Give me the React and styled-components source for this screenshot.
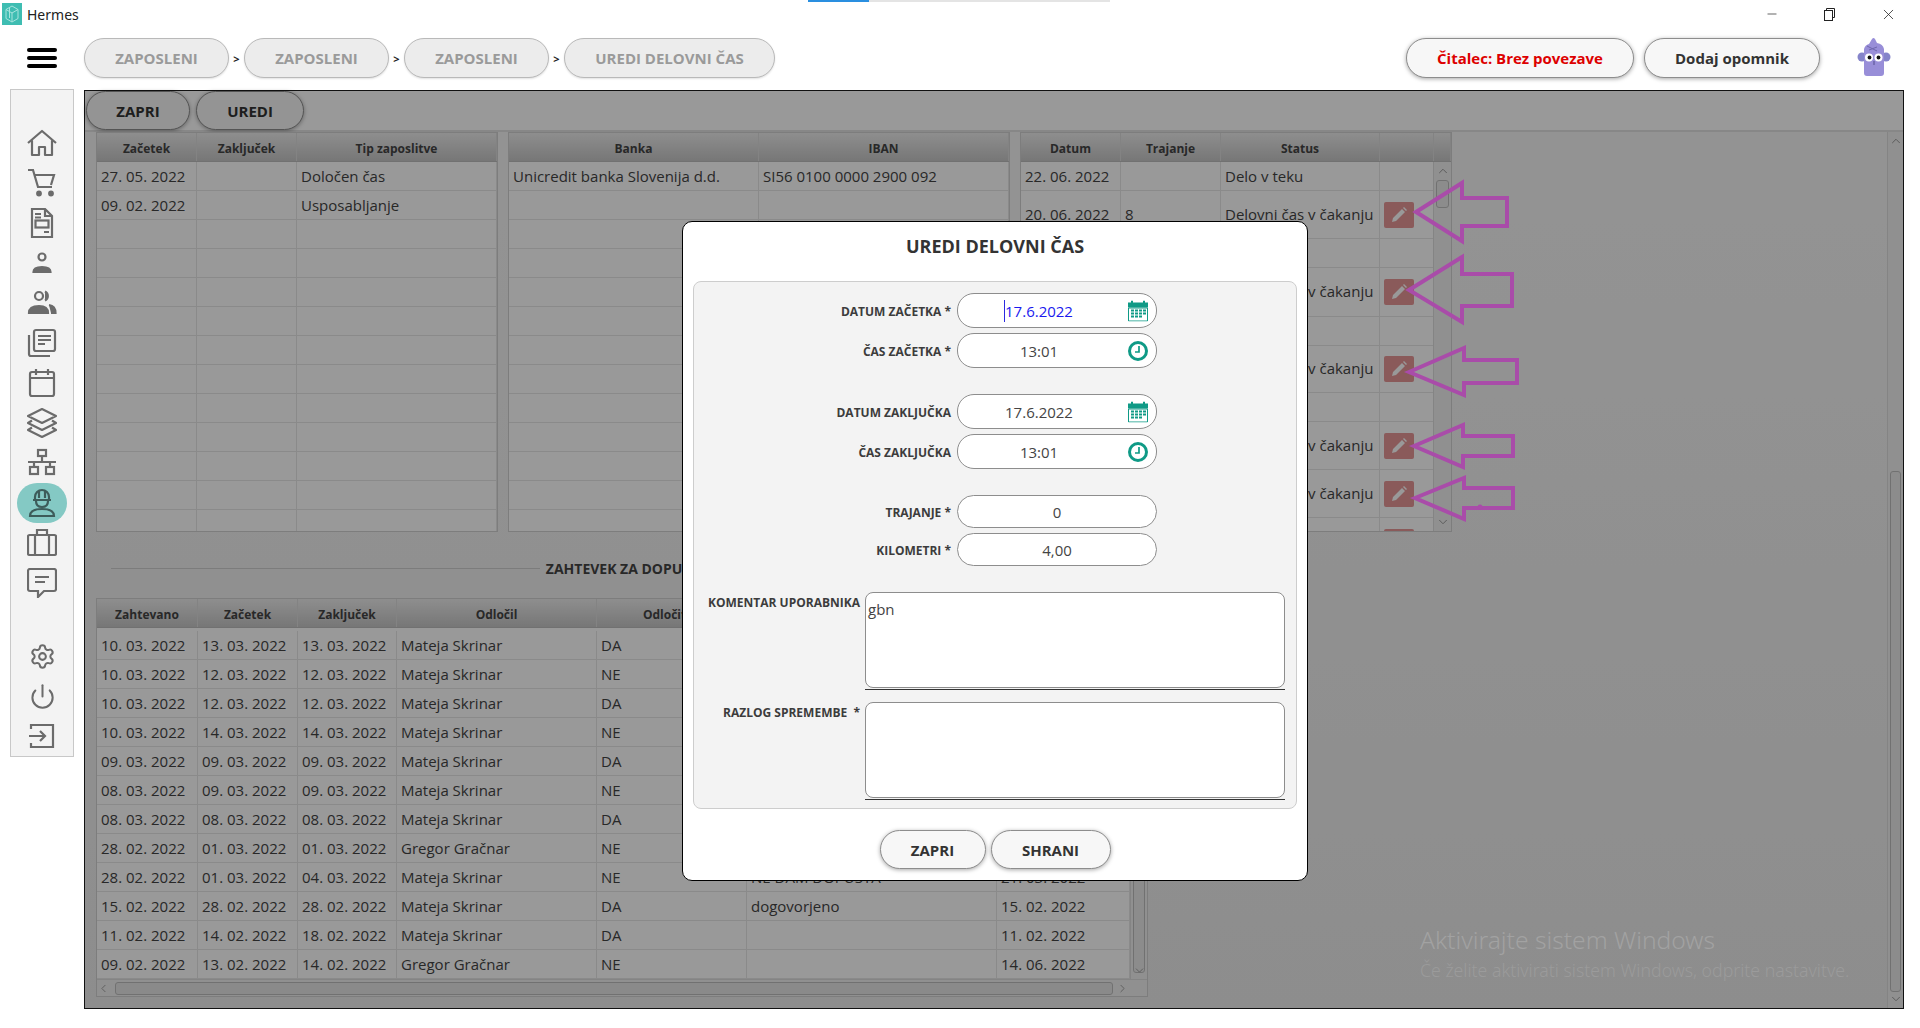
import React from 'react'
import styled, { createGlobalStyle } from 'styled-components'
import { ChevronUp, ChevronDown, ChevronLeft, ChevronRight, Minus, X, Settings, Power } from 'lucide-react'

const GlobalStyle = createGlobalStyle`
  html, body {
    margin: 0;
    padding: 0;
    background: #fff;
  }
  * {
    box-sizing: border-box;
  }
  body, input, textarea, button {
    font-family: "Open Sans", "Noto Sans", sans-serif;
  }
`

const Page = styled.div`
  position: relative;
  width: 1920px;
  height: 1028px;
  overflow: hidden;
  background: #fff;
`

const LoadBar = styled.div`
  position: absolute;
  top: 0;
  left: 808px;
  width: 302px;
  height: 2px;
  background: linear-gradient(90deg, #2a8fe0 0, #2a8fe0 61px, #e4e4e4 61px, #e4e4e4 100%);
`

const TitleBar = styled.div`
  display: flex;
  align-items: center;
  height: 30px;
  padding: 0 0 2px 2px;
`

const AppName = styled.span`
  margin-left: 5px;
  font-family: "Noto Sans", "Open Sans", sans-serif;
  font-size: 14px;
  color: #222;
`

const WindowButtons = styled.div`
  display: flex;
  align-items: center;
  margin-left: auto;
  padding-right: 23px;
  gap: 44px;
  color: #222;
`

const Header = styled.div`
  display: flex;
  align-items: center;
  height: 60px;
  padding-bottom: 4px;
`

const Burger = styled.div`
  display: flex;
  flex-direction: column;
  gap: 4px;
  width: 30px;
  margin: 0 27px;
  span {
    height: 4px;
    border-radius: 2px;
    background: #000;
  }
`

const Crumbs = styled.div`
  display: flex;
  align-items: center;
`

const Crumb = styled.div`
  display: flex;
  align-items: center;
  justify-content: center;
  width: ${p => p.$width}px;
  height: 40px;
  border: 1px solid #b9b9b9;
  border-radius: 20px;
  background: #ececec;
  box-shadow: 0 1px 2px rgba(0, 0, 0, .12);
  font-size: 15px;
  font-weight: 700;
  color: #9a9a9a;
`

const CrumbSep = styled.span`
  width: 15px;
  text-align: center;
  font-size: 11px;
  font-weight: 700;
  color: #222;
`

const HeaderRight = styled.div`
  display: flex;
  align-items: center;
  margin-left: auto;
  padding-right: 28px;
`

const Pill = styled.button`
  width: ${p => p.$width}px;
  height: ${p => p.$height || 40}px;
  margin-left: ${p => p.$left || 0}px;
  padding: 0;
  border: 1px solid #8d8d8d;
  border-radius: 20px;
  background: #f7f7f7;
  box-shadow: 0 1px 4px rgba(0, 0, 0, .35);
  font-size: 15px;
  font-weight: 700;
  color: ${p => p.$color || '#333'};
`

const Mascot = styled.svg`
  margin-left: 36px;
`

const Body = styled.div`
  display: flex;
  align-items: flex-start;
`

const Sidebar = styled.nav`
  display: flex;
  flex-direction: column;
  align-items: center;
  width: 64px;
  height: 668px;
  margin: -1px 10px 0;
  padding-top: 33px;
  background: #f3f3f3;
  border: 1px solid #c8c8c8;
`

const NavItem = styled.div`
  display: flex;
  align-items: center;
  justify-content: center;
  flex: none;
  width: 50px;
  height: 40px;
  margin-top: ${p => p.$top || 0}px;
  border-radius: 20px;
  background: ${p => (p.$active ? '#84c9c4' : 'transparent')};
  color: ${p => (p.$active ? '#3d5c5a' : '#6b6b6b')};
`

const NavIcon = styled.svg`
  width: 30px;
  height: 30px;
  fill: none;
  stroke: currentColor;
  stroke-width: 2.2;
`

const Main = styled.main`
  position: relative;
  display: flex;
  flex-direction: column;
  width: 1820px;
  height: 919px;
  border: 1px solid #111;
  background: #fff;
`

const Toolbar = styled.div`
  display: flex;
  flex: none;
  gap: 6px;
  height: 41px;
  padding-left: 1px;
  border-bottom: 2px solid #e2e2e2;
`

const Workspace = styled.div`
  display: flex;
  flex: 1;
  min-height: 0;
  background: linear-gradient(#f6f6f6, #ececec);
`

const ScrollArea = styled.div`
  flex: 1;
  padding-left: 11px;
`

const TopTables = styled.div`
  display: grid;
  grid-template-columns: 402px 502px 432px;
  column-gap: 10px;
  height: 400px;
`

const Table = styled.div`
  display: flex;
  flex-direction: column;
  overflow: hidden;
  width: ${p => (p.$width ? `${p.$width}px` : 'auto')};
  height: ${p => (p.$height ? `${p.$height}px` : '100%')};
  border: 1px solid #d0d0d0;
  background: #fff;
`

const Cols = styled.div`
  display: grid;
  flex: none;
  grid-template-columns: ${p => p.$cols};
`

const Head = styled(Cols)`
  height: 29px;
  background: linear-gradient(#ededed, #c6c6c6);
  border-bottom: 1px solid #bcbcbc;
`

const HeadCell = styled.div`
  display: flex;
  align-items: center;
  justify-content: center;
  padding-top: 2px;
  border-right: 1px solid #dadada;
  font-size: 12px;
  font-weight: 700;
  color: #444;
`

const Row = styled(Cols)`
  height: ${p => p.$height || 29}px;
  border-bottom: 1px solid #e6e6e6;
`

const Cell = styled.div`
  display: flex;
  align-items: center;
  padding: 0 0 ${p => (p.$lift ? 2 : 0)}px 4px;
  overflow: hidden;
  white-space: nowrap;
  border-right: 1px solid #e6e6e6;
  font-size: 15px;
  color: #444;
`

const TableBody = styled.div`
  display: flex;
  flex: 1;
  min-height: 0;
`

const Rows = styled.div`
  flex: 1;
  overflow: hidden;
  padding-top: ${p => p.$top || 0}px;
`

const VScroll = styled.div`
  display: flex;
  flex: none;
  flex-direction: column;
  align-items: center;
  width: ${p => p.$width || 18}px;
  padding: 2px 0;
  background: #f1f1f1;
  border-left: 1px solid #dcdcdc;
  color: #8c8c8c;
`

const Track = styled.div`
  flex: 1;
  width: 100%;
  min-height: 0;
  padding: 0 2px;
`

const Thumb = styled.div`
  height: ${p => p.$height}px;
  margin-top: ${p => p.$top}px;
  border: 1px solid #bdbdbd;
  border-radius: 3px;
  background: #eaeaea;
`

const HScroll = styled.div`
  display: flex;
  flex: none;
  align-items: center;
  height: 17px;
  background: #f1f1f1;
  border-top: 1px solid #dcdcdc;
  color: #8c8c8c;
`

const HThumb = styled.div`
  flex: 1;
  height: 13px;
  margin: 0 3px 0 5px;
  border: 1px solid #bdbdbd;
  border-radius: 3px;
  background: #e6e6e6;
`

const HSpacer = styled.span`
  flex: none;
  width: 18px;
`

const SectionTitle = styled.div`
  display: flex;
  align-items: center;
  gap: 6px;
  width: 1052px;
  height: 30px;
  margin-top: 21px;
  margin-bottom: 15px;
  padding: 0 15px;
  font-size: 14px;
  font-weight: 700;
  color: #444;
  &::before,
  &::after {
    content: "";
    flex: 1;
    height: 1px;
    background: #cfcfcf;
  }
`

const EditButton = styled.div`
  display: flex;
  align-items: center;
  justify-content: center;
  width: 30px;
  height: 26px;
  border-radius: 2px;
  background: #e69696;
  color: #fff;
`

const Backdrop = styled.div`
  position: absolute;
  inset: 0;
  z-index: 2;
  display: flex;
  align-items: flex-start;
  justify-content: center;
  padding: 130px 0 0 2px;
  background: rgba(0, 0, 0, .4);
`

const Modal = styled.div`
  display: flex;
  flex-direction: column;
  width: 626px;
  height: 660px;
  padding: 0 10px;
  border: 1px solid #000;
  border-radius: 10px;
  background: #fff;
`

const ModalTitle = styled.h2`
  flex: none;
  height: 59px;
  margin: 0;
  padding-top: 9px;
  text-align: center;
  font-size: 18px;
  line-height: 30px;
  font-weight: 700;
  color: #333;
`

const FormPanel = styled.div`
  display: flex;
  flex-direction: column;
  height: 528px;
  padding-top: 11px;
  border: 1px solid #cdcdcd;
  border-radius: 8px;
  background: #f3f3f3;
`

const FieldGroup = styled.div`
  display: flex;
  flex-direction: column;
  gap: 5px;
  margin-bottom: 26px;
`

const Field = styled.label`
  display: flex;
  align-items: center;
  gap: 6px;
`

const FieldLabel = styled.span`
  width: 257px;
  padding-top: 1px;
  text-align: right;
  font-size: 12px;
  font-weight: 700;
  color: #3c3c3c;
`

const InputBox = styled.div`
  position: relative;
  width: 200px;
  height: ${p => p.$height}px;
`

const Input = styled.input`
  width: 100%;
  height: 100%;
  padding: 0 ${p => (p.$withIcon ? 36 : 0)}px 0 0;
  border: 1px solid #8d8d8d;
  border-radius: 17px;
  outline: none;
  background: #fff;
  text-align: center;
  font-size: 15px;
  color: ${p => (p.$active ? '#1a1aee' : '#444')};
`

const Caret = styled.span`
  position: absolute;
  top: 7px;
  left: 47px;
  width: 1px;
  height: 22px;
  background: #2a2ae0;
`

const InputIcon = styled.svg`
  position: absolute;
  top: 50%;
  right: 9px;
  transform: translateY(-50%);
`

const AreaRow = styled.label`
  display: flex;
  align-items: flex-start;
  gap: 5px;
  margin-bottom: 12px;
`

const AreaLabel = styled.span`
  width: 166px;
  padding-top: 2px;
  text-align: right;
  font-size: 12px;
  font-weight: 700;
  color: #3c3c3c;
  white-space: nowrap;
`

const AreaWrap = styled.div`
  width: 420px;
  padding-bottom: 1px;
  border-bottom: 1px solid #333;
`

const TextArea = styled.textarea`
  display: block;
  width: 100%;
  height: 96px;
  padding: 6px 2px;
  border: 1px solid #8d8d8d;
  border-radius: 8px;
  outline: none;
  resize: none;
  background: #fff;
  font-size: 15px;
  color: #444;
`

const ModalFooter = styled.div`
  display: flex;
  justify-content: center;
  gap: 5px;
  margin-top: 21px;
`

const Watermark = styled.div`
  position: absolute;
  left: 1335px;
  top: 833px;
  z-index: 3;
  color: #a2a2a2;
  font-family: "Noto Sans", sans-serif;
  font-weight: 300;
  font-size: 24.6px;
  line-height: 32px;
  small {
    display: block;
    font-size: 17.7px;
    line-height: 28px;
    color: #9b9b9b;
  }
`

const ArrowLayer = styled.svg`
  position: absolute;
  top: 0;
  left: 0;
  z-index: 4;
  pointer-events: none;
`

const HomeIcon = () => (
  <NavIcon viewBox="0 0 30 30"><path d="M1 15 15 3l14 12M5 12.500V27h7v-8h6v8h7V12.500" strokeLinejoin="round" /></NavIcon>
)
const CartIcon = () => (
  <NavIcon viewBox="0 0 30 30">
    <path d="M1 2h5l5 17h14M7 7h20l-3 10" />
    <circle cx="12" cy="25.500" r="1.800" fill="currentColor" />
    <circle cx="24" cy="25.500" r="1.800" fill="currentColor" />
  </NavIcon>
)
const DocIcon = () => (
  <NavIcon viewBox="0 0 30 30">
    <path d="M5 1h13l7 7v21H5zM18 1v7h7M8 6h6M8 9.500h6M17 24h5" />
    <rect x="8.500" y="12.500" width="13" height="7" />
  </NavIcon>
)
const PersonIcon = () => (
  <NavIcon viewBox="0 0 30 30">
    <circle cx="15" cy="9" r="3.500" />
    <path d="M6.500 24c0-3.500 4-5 8.500-5s8.500 1.500 8.500 5z" fill="currentColor" />
  </NavIcon>
)
const PeopleIcon = () => (
  <NavIcon viewBox="0 0 30 30">
    <circle cx="12" cy="8" r="4" />
    <path d="M2 25c0-5 4.500-7 10-7s9 2 9 7z" fill="currentColor" />
    <path d="M18 3.500a5 5 0 0 1 0 9M22 17c4 .6 6.500 3 6.500 8H24" fill="currentColor" />
  </NavIcon>
)
const NewsIcon = () => (
  <NavIcon viewBox="0 0 30 30">
    <rect x="7" y="2" width="21" height="21" rx="2" />
    <path d="M2 7v19a2 2 0 0 0 2 2h19M11 8h13M11 12h13M11 16h7" />
  </NavIcon>
)
const CalendarIcon = () => (
  <NavIcon viewBox="0 0 30 30">
    <rect x="3" y="4" width="24" height="24" rx="2" />
    <path d="M3 10h24M9 1v6M21 1v6" />
  </NavIcon>
)
const LayersIcon = () => (
  <NavIcon viewBox="0 0 30 30">
    <path d="M15 1 29 8 15 15 1 8zM5 12.500 1 15l14 7 14-7-4-2.500M5 19.500 1 22l14 7 14-7-4-2.500" strokeLinejoin="round" />
  </NavIcon>
)
const NetworkIcon = () => (
  <NavIcon viewBox="0 0 30 30">
    <rect x="11" y="2" width="8" height="6" />
    <rect x="3" y="19" width="8" height="7" />
    <rect x="19" y="19" width="8" height="7" />
    <path d="M15 8v6M1 14h28M7 14v5M23 14v5" />
  </NavIcon>
)
const WorkerIcon = () => (
  <NavIcon viewBox="0 0 30 30">
    <path d="M8 12V9a7 7 0 0 1 14 0v3M6 12h18M12 3v7M18 3v7M9 13c0 4 2.500 6 6 6s6-2 6-6" />
    <path d="M3 28c0-5 5-7 12-7s12 2 12 7z" />
  </NavIcon>
)
const BriefcaseIcon = () => (
  <NavIcon viewBox="0 0 30 30">
    <rect x="1" y="7" width="28" height="20" rx="1.500" />
    <path d="M10 7V2h10v5M8 7v20M22 7v20" />
  </NavIcon>
)
const ChatIcon = () => (
  <NavIcon viewBox="0 0 30 30">
    <path d="M3 1h24a2 2 0 0 1 2 2v18a2 2 0 0 1-2 2H17l-6 6v-6H3a2 2 0 0 1-2-2V3a2 2 0 0 1 2-2z" />
    <path d="M8 9h14M8 14h10" />
  </NavIcon>
)
const ExitIcon = () => (
  <NavIcon viewBox="0 0 30 30">
    <path d="M4 8V4h22v22H4v-4M2 15h16M13 10l5 5-5 5" />
  </NavIcon>
)

const Logo = () => (
  <svg width="20" height="22" viewBox="0 0 20 22">
    <rect width="20" height="22" fill="#3fbdb2" />
    <path d="M10 3 16 6.500v9L10 19l-6-3.500v-9zM4 6.500 10 10l6-3.500M10 10v9M7.500 5v10" fill="none" stroke="#a8e4de" strokeWidth="1" />
  </svg>
)

const RestoreIcon = () => (
  <svg width="13" height="13" viewBox="0 0 13 13" fill="none" stroke="currentColor">
    <path d="M3.500 2.500V.5h8v9h-2" />
    <rect x="1.500" y="2.500" width="8" height="10" />
  </svg>
)

const MascotIcon = () => (
  <Mascot width="36" height="42" viewBox="0 0 36 42">
    <circle cx="6" cy="20" r="4.500" fill="#8584ca" />
    <circle cx="30" cy="20" r="4.500" fill="#8584ca" />
    <path d="M8 12 Q9 8 13 7 L16 2 Q17.500 0 19 2 L21 6 Q27 7 28 12 V36 Q28 39 25 39 H11 Q8 39 8 36 Z" fill="#988ed8" />
    <path d="M11 9l10 5M13 13l8-3" stroke="#6f67ad" fill="none" />
    <circle cx="13" cy="20.500" r="4" fill="#fff" />
    <circle cx="22.500" cy="20.500" r="4" fill="#fff" />
    <circle cx="13.500" cy="20.500" r="1.900" fill="#111" />
    <circle cx="22.500" cy="20.500" r="1.900" fill="#111" />
    <path d="M18 24v4" stroke="#554e90" />
  </Mascot>
)

const CalendarMark = () => (
  <InputIcon width="20" height="21" viewBox="0 0 20 21">
    <path d="M0 2h3V0h2v2h10V0h2v2h3v5H0z" fill="#0f9a86" />
    <path d="M.5 7.500h19v13H.5z" fill="#fff" stroke="#0f9a86" />
    <path d="M3 9h3v2H3zM7 9h3v2H7zM11 9h3v2h-3zM15 9h3v2h-3zM3 12h3v2H3zM7 12h3v2H7zM11 12h3v2h-3zM15 12h3v2h-3zM3 15h3v2H3zM7 15h3v2H7zM11 15h3v2h-3z" fill="#0f9a86" />
  </InputIcon>
)

const ClockMark = () => (
  <InputIcon width="20" height="20" viewBox="0 0 20 20" fill="none" stroke="#0f9a86">
    <circle cx="10" cy="10" r="8.500" strokeWidth="3" />
    <path d="M11 5v6H7" strokeWidth="1.700" />
  </InputIcon>
)

const PencilIcon = () => (
  <svg width="16" height="16" viewBox="0 0 16 16" fill="currentColor">
    <path d="M1 15l1-4L11 2l3 3-9 9zM12 1l1-1 3 3-1 1z" />
  </svg>
)

const navItems = [
  [HomeIcon], [CartIcon], [DocIcon], [PersonIcon], [PeopleIcon], [NewsIcon],
  [CalendarIcon], [LayersIcon], [NetworkIcon], [WorkerIcon, true], [BriefcaseIcon], [ChatIcon]
]

const staffCols = '100px 100px 200px'
const bankCols = '250px 250px'
const workCols = '100px 100px 159px 54px 17px'
const workRowCols = '100px 100px 159px 54px'
const requestCols = '101px 100px 99px 200px 150px 250px 133px 17px'
const requestRowCols = '101px 100px 99px 200px 150px 250px 133px'

const staffRows = [
  ['27. 05. 2022', '', 'Določen čas'],
  ['09. 02. 2022', '', 'Usposabljanje']
]

const workRows = [
  { date: '22. 06. 2022', hours: '', status: 'Delo v teku', height: 29 },
  { date: '20. 06. 2022', hours: '8', status: 'Delovni čas v čakanju', height: 48, edit: true },
  { date: '', hours: '', status: '', height: 29 },
  { date: '17. 06. 2022', hours: '8', status: 'Delovni čas v čakanju', height: 49, edit: true },
  { date: '', hours: '', status: '', height: 29 },
  { date: '16. 06. 2022', hours: '8', status: 'Delovni čas v čakanju', height: 47, edit: true },
  { date: '', hours: '', status: '', height: 29 },
  { date: '15. 06. 2022', hours: '8', status: 'Delovni čas v čakanju', height: 48, edit: true },
  { date: '14. 06. 2022', hours: '8', status: 'Delovni čas v čakanju', height: 48, edit: true },
  { date: '13. 06. 2022', hours: '8', status: 'Delovni čas v čakanju', height: 48, edit: true }
]

const requests = [
  ['10. 03. 2022', '13. 03. 2022', '13. 03. 2022', 'Mateja Skrinar', 'DA', '', '10. 03. 2022'],
  ['10. 03. 2022', '12. 03. 2022', '12. 03. 2022', 'Mateja Skrinar', 'NE', '', '10. 03. 2022'],
  ['10. 03. 2022', '12. 03. 2022', '12. 03. 2022', 'Mateja Skrinar', 'DA', '', '10. 03. 2022'],
  ['10. 03. 2022', '14. 03. 2022', '14. 03. 2022', 'Mateja Skrinar', 'NE', '', '10. 03. 2022'],
  ['09. 03. 2022', '09. 03. 2022', '09. 03. 2022', 'Mateja Skrinar', 'DA', '', '09. 03. 2022'],
  ['08. 03. 2022', '09. 03. 2022', '09. 03. 2022', 'Mateja Skrinar', 'NE', '', '08. 03. 2022'],
  ['08. 03. 2022', '08. 03. 2022', '08. 03. 2022', 'Mateja Skrinar', 'DA', '', '08. 03. 2022'],
  ['28. 02. 2022', '01. 03. 2022', '01. 03. 2022', 'Gregor Gračnar', 'NE', '', '28. 02. 2022'],
  ['28. 02. 2022', '01. 03. 2022', '04. 03. 2022', 'Mateja Skrinar', 'NE', 'NE DAM DOPUSTA', '21. 03. 2022'],
  ['15. 02. 2022', '28. 02. 2022', '28. 02. 2022', 'Mateja Skrinar', 'DA', 'dogovorjeno', '15. 02. 2022'],
  ['11. 02. 2022', '14. 02. 2022', '18. 02. 2022', 'Mateja Skrinar', 'DA', '', '11. 02. 2022'],
  ['09. 02. 2022', '13. 02. 2022', '14. 02. 2022', 'Gregor Gračnar', 'NE', '', '14. 06. 2022']
]

const arrows = [
  '1416,212 1462,183 1462,198 1507,198 1507,226 1462,226 1462,241',
  '1409,290 1462,257 1462,274 1512,274 1512,306 1462,306 1462,322',
  '1409,372 1464,348 1464,360 1517,360 1517,383 1464,383 1464,395',
  '1414,446 1463,425 1463,436 1513,436 1513,456 1463,456 1463,467',
  '1415,498 1464,478 1464,488 1513,488 1513,508 1464,508 1464,519'
]

const HeadRow = ({ cols, titles }) => (
  <Head $cols={cols}>
    {titles.map((title, i) => <HeadCell key={i}>{title}</HeadCell>)}
  </Head>
)

const App = () => (
  <Page>
    <GlobalStyle />
    <LoadBar />

    <TitleBar>
      <Logo />
      <AppName>Hermes</AppName>
      <WindowButtons>
        <Minus size={14} strokeWidth={1.2} />
        <RestoreIcon />
        <X size={17} strokeWidth={1.1} />
      </WindowButtons>
    </TitleBar>

    <Header>
      <Burger><span /><span /><span /></Burger>
      <Crumbs>
        <Crumb $width={145}>ZAPOSLENI</Crumb>
        <CrumbSep>&gt;</CrumbSep>
        <Crumb $width={145}>ZAPOSLENI</Crumb>
        <CrumbSep>&gt;</CrumbSep>
        <Crumb $width={145}>ZAPOSLENI</Crumb>
        <CrumbSep>&gt;</CrumbSep>
        <Crumb $width={211}>UREDI DELOVNI ČAS</Crumb>
      </Crumbs>
      <HeaderRight>
        <Pill $width={228} $color="#dd0000">Čitalec: Brez povezave</Pill>
        <Pill $width={176} $left={10}>Dodaj opomnik</Pill>
        <MascotIcon />
      </HeaderRight>
    </Header>

    <Body>
      <Sidebar>
        {navItems.map(([Icon, active], i) => (
          <NavItem key={i} $active={active}><Icon /></NavItem>
        ))}
        <NavItem $top={33}><Settings size={27} strokeWidth={1.8} /></NavItem>
        <NavItem><Power size={27} strokeWidth={1.8} /></NavItem>
        <NavItem><ExitIcon /></NavItem>
      </Sidebar>

      <Main>
        <Toolbar>
          <Pill $width={104} $height={39}>ZAPRI</Pill>
          <Pill $width={108} $height={39}>UREDI</Pill>
        </Toolbar>

        <Workspace>
          <ScrollArea>
            <TopTables>
              <Table>
                <HeadRow cols={staffCols} titles={['Začetek', 'Zaključek', 'Tip zaposlitve']} />
                {Array.from({ length: 13 }, (_, i) => (
                  <Row key={i} $cols={staffCols}>
                    {[0, 1, 2].map(c => <Cell key={c}>{staffRows[i] ? staffRows[i][c] : ''}</Cell>)}
                  </Row>
                ))}
              </Table>

              <Table>
                <HeadRow cols={bankCols} titles={['Banka', 'IBAN']} />
                {Array.from({ length: 13 }, (_, i) => (
                  <Row key={i} $cols={bankCols}>
                    <Cell>{i === 0 ? 'Unicredit banka Slovenija d.d.' : ''}</Cell>
                    <Cell>{i === 0 ? 'SI56 0100 0000 2900 092' : ''}</Cell>
                  </Row>
                ))}
              </Table>

              <Table>
                <HeadRow cols={workCols} titles={['Datum', 'Trajanje', 'Status', '', '']} />
                <TableBody>
                  <Rows>
                    {workRows.map((row, i) => (
                      <Row key={i} $cols={workRowCols} $height={row.height}>
                        <Cell $lift={row.edit}>{row.date}</Cell>
                        <Cell $lift={row.edit}>{row.hours}</Cell>
                        <Cell $lift={row.edit}>{row.status}</Cell>
                        <Cell>{row.edit && <EditButton><PencilIcon /></EditButton>}</Cell>
                      </Row>
                    ))}
                  </Rows>
                  <VScroll>
                    <ChevronUp size={14} strokeWidth={1.5} />
                    <Track><Thumb $top={2} $height={28} /></Track>
                    <ChevronDown size={14} strokeWidth={1.5} />
                  </VScroll>
                </TableBody>
              </Table>
            </TopTables>

            <SectionTitle>ZAHTEVEK ZA DOPUST</SectionTitle>

            <Table $width={1052} $height={399}>
              <HeadRow
                cols={requestCols}
                titles={['Zahtevano', 'Začetek', 'Zaključek', 'Odločil', 'Odločitev', 'Komentar', 'Datum', '']}
              />
              <TableBody>
                <Rows $top={3}>
                  {requests.map((row, i) => (
                    <Row key={i} $cols={requestRowCols}>
                      {row.map((value, c) => <Cell key={c}>{value}</Cell>)}
                    </Row>
                  ))}
                </Rows>
                <VScroll $width={17}>
                  <ChevronUp size={13} strokeWidth={1.5} />
                  <Track><Thumb $top={80} $height={250} /></Track>
                  <ChevronDown size={13} strokeWidth={1.5} />
                </VScroll>
              </TableBody>
              <HScroll>
                <ChevronLeft size={13} strokeWidth={1.5} />
                <HThumb />
                <ChevronRight size={13} strokeWidth={1.5} />
                <HSpacer />
              </HScroll>
            </Table>
          </ScrollArea>

          <VScroll $width={16}>
            <ChevronUp size={14} strokeWidth={1.5} />
            <Track><Thumb $top={323} $height={521} /></Track>
            <ChevronDown size={14} strokeWidth={1.5} />
          </VScroll>
        </Workspace>

        <Backdrop>
          <Modal>
            <ModalTitle>UREDI DELOVNI ČAS</ModalTitle>
            <FormPanel>
              <FieldGroup>
                <Field>
                  <FieldLabel>DATUM ZAČETKA *</FieldLabel>
                  <InputBox $height={35}>
                    <Input $withIcon $active readOnly value="17.6.2022" />
                    <Caret />
                    <CalendarMark />
                  </InputBox>
                </Field>
                <Field>
                  <FieldLabel>ČAS ZAČETKA *</FieldLabel>
                  <InputBox $height={35}>
                    <Input $withIcon readOnly value="13:01" />
                    <ClockMark />
                  </InputBox>
                </Field>
              </FieldGroup>

              <FieldGroup>
                <Field>
                  <FieldLabel>DATUM ZAKLJUČKA</FieldLabel>
                  <InputBox $height={35}>
                    <Input $withIcon readOnly value="17.6.2022" />
                    <CalendarMark />
                  </InputBox>
                </Field>
                <Field>
                  <FieldLabel>ČAS ZAKLJUČKA</FieldLabel>
                  <InputBox $height={35}>
                    <Input $withIcon readOnly value="13:01" />
                    <ClockMark />
                  </InputBox>
                </Field>
              </FieldGroup>

              <FieldGroup>
                <Field>
                  <FieldLabel>TRAJANJE *</FieldLabel>
                  <InputBox $height={33}><Input readOnly value="0" /></InputBox>
                </Field>
                <Field>
                  <FieldLabel>KILOMETRI *</FieldLabel>
                  <InputBox $height={33}><Input readOnly value="4,00" /></InputBox>
                </Field>
              </FieldGroup>

              <AreaRow>
                <AreaLabel>KOMENTAR UPORABNIKA</AreaLabel>
                <AreaWrap><TextArea readOnly value="gbn" /></AreaWrap>
              </AreaRow>
              <AreaRow>
                <AreaLabel>RAZLOG SPREMEMBE&nbsp; *</AreaLabel>
                <AreaWrap><TextArea readOnly value="" /></AreaWrap>
              </AreaRow>
            </FormPanel>
            <ModalFooter>
              <Pill $width={106} $height={39}>ZAPRI</Pill>
              <Pill $width={120} $height={39}>SHRANI</Pill>
            </ModalFooter>
          </Modal>
        </Backdrop>

        <Watermark>
          Aktivirajte sistem Windows
          <small>Če želite aktivirati sistem Windows, odprite nastavitve.</small>
        </Watermark>
      </Main>
    </Body>

    <ArrowLayer width="1920" height="1028" viewBox="0 0 1920 1028" fill="none" stroke="#a94ca9" strokeWidth="4">
      {arrows.map(points => <polygon key={points} points={points} />)}
      <circle cx="1480" cy="507" r="2.500" fill="#a94ca9" stroke="none" />
    </ArrowLayer>
  </Page>
)

export default App
